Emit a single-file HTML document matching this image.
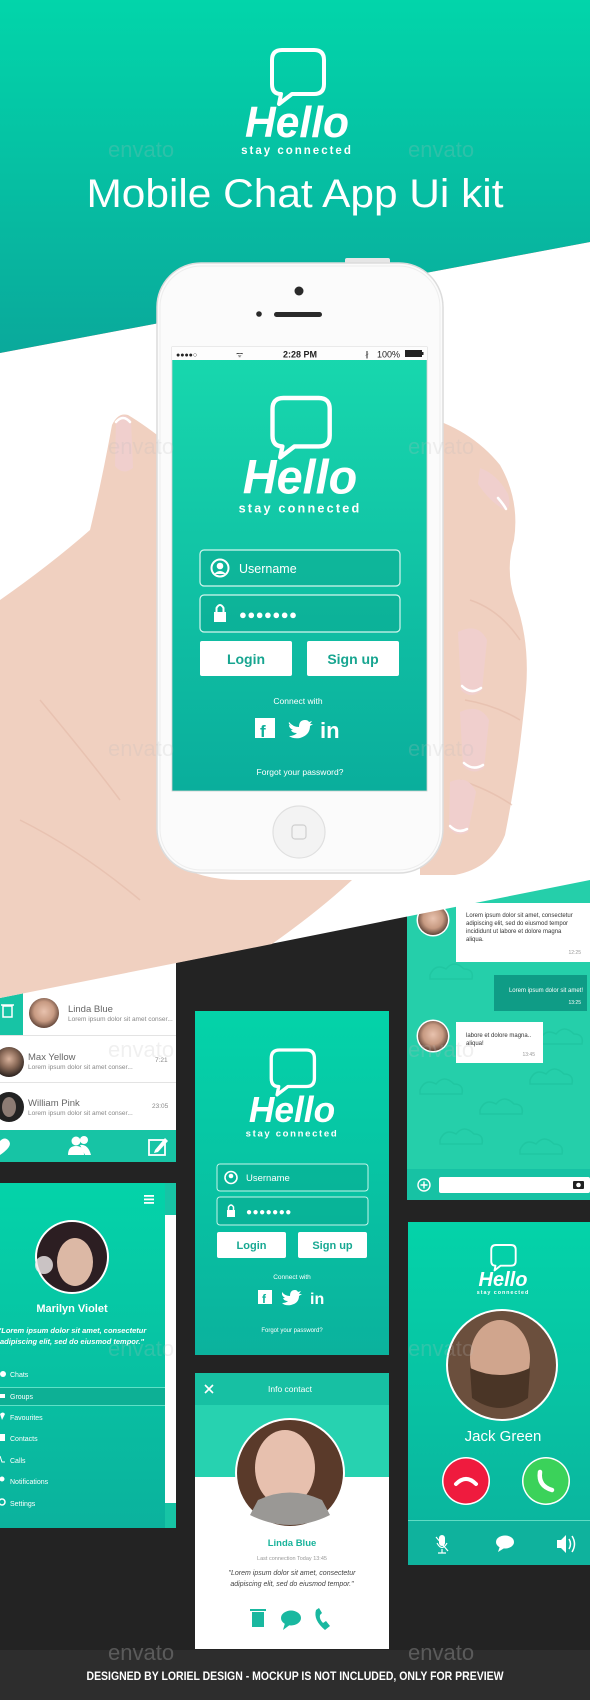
<!DOCTYPE html>
<html><head><meta charset="utf-8">
<style>
html,body{margin:0;padding:0;background:#232323;}
svg{display:block;}
text{font-family:"Liberation Sans",sans-serif;}
</style></head>
<body>
<svg width="590" height="1700" viewBox="0 0 590 1700" xmlns="http://www.w3.org/2000/svg">
<defs>
  <linearGradient id="topg" x1="0" y1="0" x2="0" y2="1">
    <stop offset="0" stop-color="#02d5aa"/><stop offset="1" stop-color="#0aa99b"/>
  </linearGradient>
  <linearGradient id="scr" x1="0" y1="0" x2="0" y2="1">
    <stop offset="0" stop-color="#18d8ae"/><stop offset="1" stop-color="#0aae9c"/>
  </linearGradient>
  <linearGradient id="pan" x1="0" y1="0" x2="0" y2="1">
    <stop offset="0" stop-color="#04d3a9"/><stop offset="1" stop-color="#0bb29d"/>
  </linearGradient>
  <radialGradient id="face1" cx="0.5" cy="0.45" r="0.6">
    <stop offset="0" stop-color="#e8c2ae"/><stop offset="0.55" stop-color="#c79a82"/><stop offset="1" stop-color="#4a3128"/>
  </radialGradient>
  <radialGradient id="face2" cx="0.5" cy="0.4" r="0.6">
    <stop offset="0" stop-color="#d9b29c"/><stop offset="0.5" stop-color="#8a6a58"/><stop offset="1" stop-color="#2a211e"/>
  </radialGradient>
  <g id="logo">
    <path d="M282 50 H314 Q324 50 324 60 V84 Q324 94 314 94 H292 L279 104 L281 94 Q272 94 272 84 V60 Q272 50 282 50 Z" fill="none" stroke="#fff" stroke-width="4" stroke-linejoin="round"/>
    <text x="297" y="137" text-anchor="middle" font-size="44" font-weight="bold" font-style="italic" fill="#fff" textLength="104" lengthAdjust="spacingAndGlyphs">Hello</text>
    <text x="297" y="154" text-anchor="middle" font-size="11.5" font-weight="bold" fill="#fff" letter-spacing="2">stay connected</text>
  </g>
</defs>

<rect x="0" y="0" width="590" height="1700" fill="#232323"/>

<!-- left chat list -->
<rect x="0" y="960" width="176" height="202" fill="#fff"/>
<rect x="0" y="988" width="23" height="47" fill="#17c4a5"/>
<rect x="3" y="1006" width="9" height="11" fill="none" stroke="#fff" stroke-width="1.5"/>
<line x1="1" y1="1005" x2="14" y2="1005" stroke="#fff" stroke-width="1.5"/>
<line x1="0" y1="1035.5" x2="176" y2="1035.5" stroke="#e3e3e3"/>
<line x1="0" y1="1082.5" x2="176" y2="1082.5" stroke="#e3e3e3"/>
<circle cx="44" cy="1013" r="15" fill="url(#face1)"/>
<text x="68" y="1012" font-size="9.5" fill="#666">Linda Blue</text>
<text x="68" y="1021" font-size="6.5" fill="#888">Lorem ipsum dolor sit amet conser...</text>
<circle cx="9" cy="1062" r="15" fill="url(#face2)"/>
<text x="28" y="1060" font-size="9.5" fill="#666">Max Yellow</text>
<text x="28" y="1069" font-size="6.5" fill="#888">Lorem ipsum dolor sit amet conser...</text>
<text x="155" y="1062" font-size="6.5" fill="#888">7:21</text>
<circle cx="9" cy="1107" r="15" fill="#222"/>
<ellipse cx="9" cy="1107" rx="7" ry="10" fill="#8c7b73"/>
<text x="28" y="1106" font-size="9.5" fill="#666">William Pink</text>
<text x="28" y="1115" font-size="6.5" fill="#888">Lorem ipsum dolor sit amet conser...</text>
<text x="152" y="1108" font-size="6.5" fill="#888">23:05</text>
<rect x="0" y="1130" width="176" height="32" fill="#17c4a5"/>
<path d="M0 1141 Q5 1136 9 1141 Q13 1146 0 1155 Z" fill="#fff"/>
<circle cx="76" cy="1141" r="4.5" fill="#fff"/><path d="M68 1155 Q68 1146 76 1146 Q84 1146 84 1155 Z" fill="#fff"/>
<circle cx="84" cy="1140" r="4" fill="#fff"/><path d="M80 1145 Q88 1144 91 1155 H85 Z" fill="#fff"/>
<rect x="149" y="1140" width="16" height="15" fill="none" stroke="#fff" stroke-width="1.8"/>
<path d="M155 1150 L165 1138 L168 1141 L158 1152 L154 1153 Z" fill="#fff"/>

<!-- left menu panel -->
<rect x="0" y="1183" width="176" height="345" fill="#fff"/>
<rect x="165" y="1183" width="11" height="32" fill="#17c4a5"/>
<rect x="165" y="1503" width="11" height="25" fill="#17c4a5"/>
<rect x="0" y="1183" width="165" height="345" fill="url(#pan)"/>
<rect x="144" y="1195" width="10" height="1.8" fill="#fff"/><rect x="144" y="1198.5" width="10" height="1.8" fill="#fff"/><rect x="144" y="1202" width="10" height="1.8" fill="#fff"/>
<circle cx="72" cy="1257" r="37" fill="#fff"/>
<circle cx="72" cy="1257" r="35" fill="#2c1e22"/>
<ellipse cx="75" cy="1262" rx="18" ry="24" fill="#dcb8a5"/>
<circle cx="44" cy="1265" r="9" fill="#f2ecee" opacity="0.8"/>
<text x="72" y="1312" text-anchor="middle" font-size="11" font-weight="bold" fill="#fff">Marilyn Violet</text>
<text x="72" y="1333" text-anchor="middle" font-size="7.5" font-style="italic" font-weight="bold" fill="#fff">"Lorem ipsum dolor sit amet, consectetur</text>
<text x="72" y="1344" text-anchor="middle" font-size="7.5" font-style="italic" font-weight="bold" fill="#fff">adipiscing elit, sed do eiusmod tempor."</text>
<rect x="0" y="1388" width="165" height="17" fill="#0fa990" opacity="0.7"/>
<line x1="0" y1="1387.5" x2="165" y2="1387.5" stroke="#5fe0c6"/>
<line x1="0" y1="1405.5" x2="165" y2="1405.5" stroke="#5fe0c6"/>
<g font-size="7" fill="#fff">
<text x="10" y="1377">Chats</text><text x="10" y="1399">Groups</text><text x="10" y="1420">Favourites</text>
<text x="10" y="1441">Contacts</text><text x="10" y="1463">Calls</text><text x="10" y="1484">Notifications</text><text x="10" y="1506">Settings</text>
</g>
<g fill="#fff"><circle cx="3" cy="1374" r="3"/><rect x="0" y="1394" width="5" height="4"/><path d="M0 1414 Q3 1411 5 1414 L2 1420 Z"/><rect x="0" y="1434" width="5" height="7"/><path d="M0 1456 L2 1462 L5 1462" stroke="#fff" fill="none"/><circle cx="2" cy="1479" r="2.5"/><circle cx="2" cy="1502" r="3" fill="none" stroke="#fff" stroke-width="1.5"/></g>

<!-- center login panel -->
<rect x="195" y="1011" width="194" height="344" fill="url(#pan)"/>
<use href="#logo" transform="translate(292,1050) scale(0.83) translate(-297,-50)"/>
<rect x="217" y="1164" width="151" height="27" rx="3" fill="#0a9d88" fill-opacity="0.35" stroke="#c6f4ea" stroke-width="1"/>
<circle cx="231" cy="1177.5" r="6" fill="none" stroke="#fff" stroke-width="1.6"/><circle cx="231" cy="1176" r="2.3" fill="#fff"/>
<text x="246" y="1181" font-size="9.5" fill="#fff">Username</text>
<rect x="217" y="1197" width="151" height="28" rx="3" fill="#0a9d88" fill-opacity="0.35" stroke="#c6f4ea" stroke-width="1"/>
<rect x="227" y="1210" width="8" height="7" fill="#fff"/><path d="M228.5 1210 V1207 Q231 1203 233.5 1207 V1210" fill="none" stroke="#fff" stroke-width="1.5"/>
<text x="246" y="1215" font-size="10" fill="#fff" letter-spacing="0.5">●●●●●●●</text>
<rect x="217" y="1232" width="69" height="26" rx="2" fill="#fff"/>
<rect x="298" y="1232" width="69" height="26" rx="2" fill="#fff"/>
<text x="251.5" y="1249" text-anchor="middle" font-size="11" font-weight="bold" fill="#17a892">Login</text>
<text x="332.5" y="1249" text-anchor="middle" font-size="11" font-weight="bold" fill="#17a892">Sign up</text>
<text x="292" y="1279" text-anchor="middle" font-size="6.5" fill="#fff">Connect with</text>
<rect x="258" y="1290" width="14" height="14" fill="#fff"/><text x="262" y="1303" font-size="12" font-weight="bold" fill="#0fb29c">f</text>
<path d="M282 1292 Q285 1296 290 1296 Q290 1290 295 1290 Q297 1290 298 1292 L301 1291 L299 1294 L302 1294 L299 1296 Q299 1303 291 1305 Q285 1306 282 1303 Q286 1303 288 1301 Q284 1301 283 1298 L285 1298 Q282 1296 282 1294 Z" fill="#fff"/>
<text x="310" y="1304" font-size="16" font-weight="bold" fill="#fff">in</text>
<text x="292" y="1332" text-anchor="middle" font-size="6" fill="#fff">Forgot your password?</text>

<!-- info contact panel -->
<rect x="195" y="1373" width="194" height="276" fill="#fff"/>
<rect x="195" y="1405" width="194" height="72" fill="#27d2b0"/>
<rect x="195" y="1373" width="194" height="32" fill="#17c0a3"/>
<path d="M205 1385 L213 1393 M213 1385 L205 1393" stroke="#fff" stroke-width="1.6"/>
<text x="290" y="1392" text-anchor="middle" font-size="8.5" fill="#fff">Info contact</text>
<circle cx="290" cy="1473" r="55" fill="#fff"/>
<circle cx="290" cy="1473" r="53" fill="#5a3a2a"/>
<ellipse cx="285" cy="1468" rx="30" ry="38" fill="#e7c0ae"/>
<path d="M258 1500 Q290 1485 322 1500 L330 1515 Q290 1535 250 1515 Z" fill="#9a9895"/>
<text x="292" y="1546" text-anchor="middle" font-size="9.5" font-weight="bold" fill="#19b39b">Linda Blue</text>
<text x="292" y="1560" text-anchor="middle" font-size="5.5" fill="#999">Last connection Today 13:45</text>
<text x="292" y="1575" text-anchor="middle" font-size="7" font-style="italic" fill="#444">"Lorem ipsum dolor sit amet, consectetur</text>
<text x="292" y="1586" text-anchor="middle" font-size="7" font-style="italic" fill="#444">adipiscing elit, sed do eiusmod tempor."</text>
<g fill="#19b8a0">
<rect x="252" y="1612" width="12" height="15"/><rect x="250" y="1609" width="16" height="2"/>
<ellipse cx="291" cy="1618" rx="10" ry="7.5"/><path d="M285 1623 L283 1630 L291 1624 Z"/>
<path d="M316 1610 Q313 1620 325 1630 L330 1626 L326 1621 L323 1623 Q319 1619 320 1615 L322 1613 L319 1608 Z"/>
</g>

<!-- right chat panel -->
<rect x="407" y="870" width="183" height="330" fill="#25cfaa"/>
<g fill="none" stroke="#1fc4a0" stroke-width="1.5" opacity="0.8">
<path d="M420 1090 q5 -12 16 -6 q8 -10 18 0 q10 0 8 10 h-42 z"/>
<path d="M480 1110 q5 -12 16 -6 q8 -10 18 0 q10 0 8 10 h-42 z"/>
<path d="M530 1080 q5 -12 16 -6 q8 -10 18 0 q10 0 8 10 h-42 z"/>
<path d="M440 1140 q5 -12 16 -6 q8 -10 18 0 q10 0 8 10 h-42 z"/>
<path d="M520 1150 q5 -12 16 -6 q8 -10 18 0 q10 0 8 10 h-42 z"/>
<path d="M430 975 q5 -12 16 -6 q8 -10 18 0 q10 0 8 10 h-42 z"/>
<path d="M540 1040 q5 -12 16 -6 q8 -10 18 0 q10 0 8 10 h-42 z"/>
</g>
<rect x="456" y="903" width="134" height="59" fill="#fff"/>
<g font-size="6" fill="#333">
<text x="466" y="917">Lorem ipsum dolor sit amet, consectetur</text>
<text x="466" y="925">adipiscing elit, sed do eiusmod tempor</text>
<text x="466" y="933">incididunt ut labore et dolore magna</text>
<text x="466" y="941">aliqua.</text>
</g>
<text x="581" y="954" text-anchor="end" font-size="5" fill="#999">12:25</text>
<circle cx="433" cy="920" r="16.5" fill="#fff"/><circle cx="433" cy="920" r="15" fill="url(#face1)"/>
<rect x="494" y="975" width="93" height="36" fill="#0f9c86"/>
<text x="583" y="992" text-anchor="end" font-size="6" fill="#fff">Lorem ipsum dolor sit amet!</text>
<text x="581" y="1004" text-anchor="end" font-size="5" fill="#fff">13:25</text>
<rect x="456" y="1022" width="87" height="41" fill="#fff"/>
<text x="466" y="1037" font-size="6" fill="#333">labore et dolore magna..</text>
<text x="466" y="1045" font-size="6" fill="#333">aliqua!</text>
<text x="535" y="1056" text-anchor="end" font-size="5" fill="#999">13:45</text>
<circle cx="433" cy="1036" r="16.5" fill="#fff"/><circle cx="433" cy="1036" r="15" fill="url(#face1)"/>
<rect x="407" y="1169" width="183" height="31" fill="#17c2a4"/>
<circle cx="424" cy="1185" r="6" fill="none" stroke="#fff" stroke-width="1.4"/>
<path d="M420.5 1185 H427.5 M424 1181.5 V1188.5" stroke="#fff" stroke-width="1.4"/>
<rect x="439" y="1177" width="151" height="16" rx="2" fill="#fff"/>
<rect x="573" y="1181" width="11" height="8" rx="1" fill="#222"/><circle cx="578.5" cy="1185" r="2.3" fill="#fff"/>

<!-- right call panel -->
<rect x="408" y="1222" width="182" height="343" fill="url(#pan)"/>
<use href="#logo" transform="translate(503,1245) scale(0.47) translate(-297,-50)"/>
<circle cx="502" cy="1365" r="56" fill="#fff"/>
<circle cx="502" cy="1365" r="54" fill="#6b4f3d"/>
<ellipse cx="500" cy="1358" rx="30" ry="38" fill="#d0a58d"/>
<path d="M470 1368 Q500 1382 530 1368 L528 1398 Q500 1418 472 1398 Z" fill="#4a3526"/>
<text x="503" y="1441" text-anchor="middle" font-size="15" fill="#fff">Jack Green</text>
<circle cx="466" cy="1481" r="24" fill="#fff"/><circle cx="466" cy="1481" r="22.5" fill="#ef1b3e"/>
<path d="M456 1484 Q466 1474 476 1484" fill="none" stroke="#fff" stroke-width="4" stroke-linecap="round"/>
<circle cx="546" cy="1481" r="24" fill="#fff"/><circle cx="546" cy="1481" r="22.5" fill="#3bd25a"/>
<path d="M540 1472 Q538 1486 552 1490" fill="none" stroke="#fff" stroke-width="4.5" stroke-linecap="round"/>
<line x1="408" y1="1520.5" x2="590" y2="1520.5" stroke="#5fdcc4"/>
<rect x="408" y="1521" width="182" height="44" fill="#0fb29d"/>
<rect x="439" y="1535" width="6" height="11" rx="3" fill="#fff"/><path d="M437 1543 Q442 1552 447 1543 M442 1549 V1553 M438 1553 H446 M436 1537 L448 1551" stroke="#fff" fill="none" stroke-width="1.2"/>
<ellipse cx="505" cy="1542" rx="9" ry="6.5" fill="#fff"/><path d="M500 1546 L498 1552 L506 1547 Z" fill="#fff"/>
<path d="M557 1540 H561 L566 1535 V1553 L561 1548 H557 Z" fill="#fff"/>
<path d="M569 1539 Q572 1544 569 1549 M572 1536 Q577 1544 572 1552" fill="none" stroke="#fff" stroke-width="1.5"/>

<!-- top section -->
<polygon points="0,0 590,0 590,242 0,353" fill="url(#topg)"/>
<polygon points="0,353 590,242 590,880 0,998" fill="#ffffff"/>

<use href="#logo"/>
<text x="295" y="207" text-anchor="middle" font-size="40" fill="#fff" textLength="417" lengthAdjust="spacingAndGlyphs">Mobile Chat App Ui kit</text>

<!-- hand -->
<g fill="#f0d0c0">
<path d="M112 425 Q118 412 128 415 Q145 425 170 445 L172 862 Q200 880 240 880 L352 880 Q320 910 272 944 L0 998 L0 600 Q50 565 90 530 Q102 480 112 425 Z"/>
<path d="M420 415 Q470 428 500 465 Q520 500 514 540 Q505 570 515 600 Q530 640 526 690 Q522 730 518 760 Q512 800 505 835 Q492 868 455 875 L420 875 Z"/>
</g>
<path d="M40 700 Q90 760 120 800 M20 820 Q80 850 140 900 M470 600 Q500 610 520 640 M465 700 Q495 705 520 720 M460 780 Q490 790 512 805" stroke="#e2b9a6" stroke-width="1.5" fill="none" opacity="0.6"/>
<g fill="#f0cfcd">
<path d="M116 420 Q124 411 131 420 L133 468 Q123 476 115 466 Z"/>
<path d="M480 468 Q497 474 508 494 Q512 508 505 510 Q490 502 478 484 Z"/>
<path d="M458 632 Q478 622 487 640 L482 690 Q471 700 461 690 Z"/>
<path d="M460 712 Q480 703 489 720 L484 768 Q473 776 463 766 Z"/>
<path d="M450 782 Q468 774 476 792 L468 832 Q457 838 449 828 Z"/>
</g>
<g fill="none" stroke="#fff" stroke-width="2.5" stroke-linecap="round">
<path d="M116 422 Q123 414 130 422"/>
<path d="M498 498 Q504 505 506 509"/>
<path d="M462 686 Q471 695 481 688"/>
<path d="M464 763 Q473 771 483 765"/>
<path d="M450 826 Q458 834 467 829"/>
</g>

<!-- phone -->
<rect x="345" y="258" width="45" height="8" rx="2" fill="#e6e6e6"/>
<rect x="157" y="263" width="286" height="610" rx="44" fill="#fbfbfb" stroke="#dcdcdc" stroke-width="1.5"/>
<rect x="160" y="266" width="280" height="604" rx="41" fill="none" stroke="#eeeeee" stroke-width="1"/>
<circle cx="299" cy="291" r="4.5" fill="#2a2a2a"/>
<circle cx="259" cy="314" r="2.8" fill="#2a2a2a"/>
<rect x="274" y="312" width="48" height="5" rx="2.5" fill="#2a2a2a"/>
<rect x="172" y="347" width="255" height="444" fill="url(#scr)" stroke="#cfcfcf" stroke-width="0.8"/>
<rect x="172" y="347" width="255" height="13" fill="#fdfdfd"/>
<text x="176" y="357" font-size="7" fill="#222">●●●●○</text>
<text x="236" y="357" font-size="8" fill="#222">ᯤ</text>
<text x="300" y="357.5" text-anchor="middle" font-size="9" font-weight="bold" fill="#222">2:28 PM</text>
<text x="365" y="357" font-size="8" fill="#555">∦</text>
<text x="377" y="357.5" font-size="9" fill="#222">100%</text>
<rect x="405" y="350" width="17" height="7" fill="#222"/><rect x="422" y="352" width="1.5" height="3" fill="#222"/>
<use href="#logo" transform="translate(300,398) scale(1.1) translate(-297,-50)"/>
<rect x="200" y="550" width="200" height="36" rx="4" fill="#0a9d88" fill-opacity="0.35" stroke="#d3f6ee" stroke-width="1.2"/>
<circle cx="220" cy="568" r="8.5" fill="none" stroke="#fff" stroke-width="2"/><circle cx="220" cy="566" r="3.3" fill="#fff"/><path d="M214 574 Q220 568 226 574" fill="#fff"/>
<text x="239" y="573" font-size="12.5" fill="#fff">Username</text>
<rect x="200" y="595" width="200" height="37" rx="4" fill="#0a9d88" fill-opacity="0.35" stroke="#d3f6ee" stroke-width="1.2"/>
<rect x="214" y="612" width="12" height="10" fill="#fff"/><path d="M216.5 612 V608 Q220 602 223.5 608 V612" fill="none" stroke="#fff" stroke-width="2"/>
<text x="239" y="619" font-size="13" fill="#fff" letter-spacing="0.5">●●●●●●●</text>
<rect x="200" y="641" width="92" height="35" rx="2" fill="#fff"/>
<rect x="307" y="641" width="92" height="35" rx="2" fill="#fff"/>
<text x="246" y="664" text-anchor="middle" font-size="14" font-weight="bold" fill="#17a590">Login</text>
<text x="353" y="664" text-anchor="middle" font-size="14" font-weight="bold" fill="#17a590">Sign up</text>
<text x="298" y="704" text-anchor="middle" font-size="8.5" fill="#fff">Connect with</text>
<rect x="255" y="718" width="20" height="20" fill="#fff"/><text x="260" y="737" font-size="17" font-weight="bold" fill="#10b09b">f</text>
<path d="M289 722 Q293 727 299 727 Q299 720 305 720 Q308 720 309 722 L312 721 L310 724 L313 724 L310 726 Q310 735 300 738 Q293 739 289 736 Q294 736 297 733 Q292 733 291 730 L293 730 Q289 728 289 725 L291 725.5 Q288 724 289 722 Z" fill="#fff"/>
<text x="320" y="738" font-size="22" font-weight="bold" fill="#fff">in</text>
<text x="300" y="775" text-anchor="middle" font-size="8.5" fill="#fff">Forgot your password?</text>
<circle cx="299" cy="832" r="26" fill="#f3f3f3" stroke="#e0e0e0" stroke-width="1.2"/>
<rect x="292" y="825" width="14" height="14" rx="3" fill="none" stroke="#cfcfcf" stroke-width="1.2"/>

<!-- envato watermarks -->
<g font-size="22" fill="#bdbdbd" opacity="0.22">
<text x="108" y="157">envato</text><text x="408" y="157">envato</text>
<text x="108" y="454">envato</text><text x="408" y="454">envato</text>
<text x="108" y="756">envato</text><text x="408" y="756">envato</text>
<text x="108" y="1057">envato</text><text x="408" y="1057">envato</text>
<text x="108" y="1356">envato</text><text x="408" y="1356">envato</text>
</g>

<!-- footer -->
<rect x="0" y="1650" width="590" height="50" fill="#2d2d2d"/>
<g font-size="22" fill="#8a8a8a" opacity="0.5"><text x="108" y="1660">envato</text><text x="408" y="1660">envato</text></g>
<text x="295" y="1680" text-anchor="middle" font-size="11.5" font-weight="bold" fill="#fff" textLength="417" lengthAdjust="spacingAndGlyphs">DESIGNED BY LORIEL DESIGN - MOCKUP IS NOT INCLUDED, ONLY FOR PREVIEW</text>
</svg>
</body></html>
